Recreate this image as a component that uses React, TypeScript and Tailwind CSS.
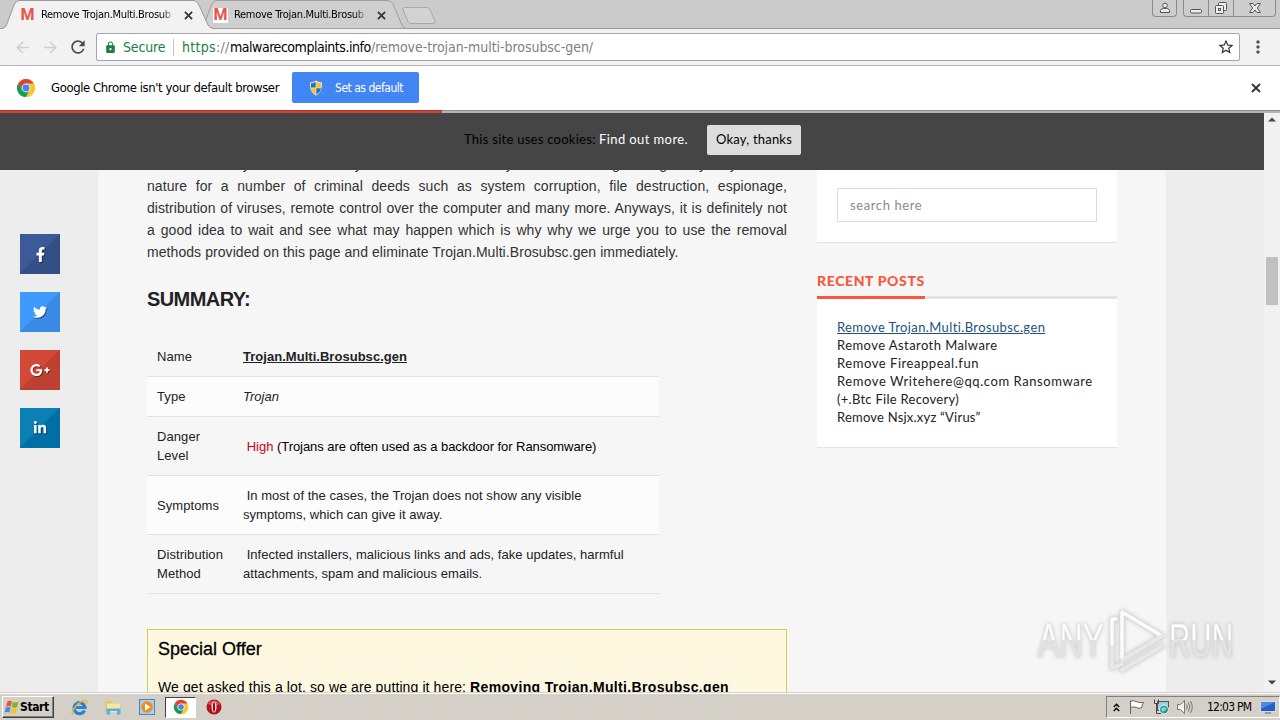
import { clsx } from "clsx";
import type { ReactNode } from "react";
import { FaFacebookF, FaGooglePlusG, FaLinkedinIn, FaTwitter } from "react-icons/fa";
import { MdArrowBack, MdArrowForward, MdLock, MdMoreVert, MdRefresh, MdStarBorder } from "react-icons/md";

const recentPosts = [
  { title: "Remove Astaroth Malware", tracking: "tracking-[0.43px]" },
  { title: "Remove Fireappeal.fun", tracking: "tracking-[0.55px]" },
  { title: "Remove Writehere@qq.com Ransomware", tracking: "tracking-[0.58px]" },
  { title: "(+.Btc File Recovery)", tracking: "tracking-[0.28px]" },
  { title: "Remove Nsjx.xyz “Virus”", tracking: "tracking-[0.22px]" },
];

const socials = [
  { name: "facebook", color: "from-[#3c5a9a] to-[#344e86]", icon: <FaFacebookF size={15} /> },
  { name: "twitter", color: "from-[#4099ff] to-[#3a8ae6]", icon: <FaTwitter size={14} /> },
  { name: "google", color: "from-[#d34836] to-[#bd4031]", icon: <FaGooglePlusG size={20} /> },
  { name: "linkedin", color: "from-[#0c7fb5] to-[#006fa6]", icon: <FaLinkedinIn size={14} /> },
];

function Close({ size, className }: { size: number; className?: string }) {
  return (
    <svg className={className} width={size} height={size} viewBox="0 0 10 10" fill="none" stroke="#333" strokeWidth="1.9">
      <path d="M1 1 9 9M9 1 1 9" />
    </svg>
  );
}

function ChromeLogo({ size }: { size: number }) {
  return (
    <svg width={size} height={size} viewBox="0 0 20 20">
      <circle cx="10" cy="10" r="9" fill="#fbc62d" />
      <path d="M2.2 5.5A9 9 0 0 0 10 19L13.6 12.1 10 10 6.4 12.1Z" fill="#0f9d58" />
      <path d="M10 5.6 17.8 5.5A9 9 0 0 1 10 19L13.7 12.1Z" fill="#fbc62d" />
      <path d="M2.2 5.5 6.4 12 10 10 10 5.6 17.8 5.5A9 9 0 0 0 2.2 5.5Z" fill="#db4437" />
      <circle cx="10" cy="10" r="4.4" fill="#f1f1f1" />
      <circle cx="10" cy="10" r="3.4" fill="#4285f4" />
    </svg>
  );
}

function Shield() {
  return (
    <svg width="14" height="16" viewBox="0 0 14 16">
      <path d="M7 .5C5 2 3 2.3 1 2.2.6 8 2 13 7 15.5 12 13 13.4 8 13 2.2 11 2.3 9 2 7 .5Z" fill="#e9e3c0" />
      <path d="M6.7 2C5 3 3.7 3.3 2 3.3L1.9 7.5H6.7Z" fill="#2b6fc4" />
      <path d="M7.3 2C9 3 10.3 3.3 12 3.3L12.1 7.5H7.3Z" fill="#f5c62c" />
      <path d="M6.7 8.2H2C2.5 11 4 13 6.7 14.4Z" fill="#f5c62c" />
      <path d="M7.3 8.2H12C11.5 11 10 13 7.3 14.4Z" fill="#2b6fc4" />
    </svg>
  );
}

function Tab({ active }: { active?: boolean }) {
  return (
    <div className={clsx("relative flex h-[29px] items-center pt-px", active ? "z-10 w-[212px] pl-[20px]" : "-ml-[6px] w-[200px] pl-[7px]")}>
      <svg className={clsx("absolute top-0", active ? "left-0" : "-left-[3px]")} width="214" height="29">
        {active ? (
          <path d="M-2 28.5H2Q5 28.5 6.5 25L14 5Q16 .5 19 .5H194Q197 .5 199 5L208 25Q210 28.5 214 28.5V30H-2Z" fill="#f2f2f2" stroke="#9a9a9a" />
        ) : (
          <path d="M0 28.5 L5 14 9 4Q10 .5 14 .5H184Q188 .5 190 4L199 25Q200 28.5 204 28.5Z" fill="#cfcfcf" stroke="#9f9f9f" />
        )}
      </svg>
      {active && <span className="absolute bottom-0 left-[4px] h-px w-[206px] bg-[#f2f2f2]" />}
      <span className={clsx("relative flex h-[15px] w-[15px] items-center justify-center font-['Roboto'] text-[16px] leading-none font-bold text-[#e8534a]", !active && "bg-white")}>
        M
      </span>
      <span
        className={clsx(
          "relative ml-[6px] w-[134px] bg-linear-to-r from-black from-88% bg-clip-text text-[11px] tracking-[-0.3px] whitespace-nowrap text-transparent",
          active ? "to-[#f2f2f2]" : "to-[#cfcfcf]",
        )}
      >
        Remove Trojan.Multi.Brosub
      </span>
      <Close className="relative ml-[9px]" size={9} />
    </div>
  );
}

function WindowControls() {
  return (
    <div className="ml-auto flex h-[17px] pr-[4px]">
      <div className="mr-[6px] flex w-[25px] items-center justify-center rounded-b border border-t-0 border-[#8b8b8b] bg-[#cdcdcd]">
        <svg width="12" height="12" viewBox="0 0 12 12" fill="#eee" stroke="#555">
          <circle cx="6" cy="3.5" r="2.3" />
          <path d="M1.5 10.5V8.5Q2 6.5 4.5 6.5H7.5Q10 6.5 10.5 8.5V10.5Z" />
        </svg>
      </div>
      <div className="flex w-[93px] rounded-b border border-t-0 border-[#8b8b8b] bg-[#cdcdcd]">
        <div className="flex w-[25px] items-center justify-center border-r border-[#8b8b8b]">
          <svg width="14" height="14" fill="#eee" stroke="#555">
            <rect x="1.5" y="8.5" width="11" height="3.5" rx="1" />
          </svg>
        </div>
        <div className="flex w-[25px] items-center justify-center border-r border-[#8b8b8b]">
          <svg width="14" height="14" fill="#eee" stroke="#555">
            <rect x="4.5" y="1.5" width="8" height="8" rx="1" />
            <rect x="1.5" y="4.5" width="8" height="8" rx="1" />
            <rect x="4.5" y="7.5" width="2" height="2" />
          </svg>
        </div>
        <div className="flex flex-1 items-center justify-center">
          <svg width="14" height="12" fill="#eee" stroke="#555">
            <path d="M1.5 1.5H5L7 4 9 1.5H12.5L9.3 6 12.5 10.5H9L7 8 5 10.5H1.5L4.7 6Z" />
          </svg>
        </div>
      </div>
    </div>
  );
}

function TabStrip() {
  return (
    <div className="relative flex h-[29px] shrink-0 bg-[#cbcbcb]">
      <span className="absolute bottom-0 left-0 h-px w-full bg-[#9a9a9a]" />
      <Tab active />
      <Tab />
      <svg className="-ml-[6px]" width="40" height="29">
        <path d="M4.5 7.5H27Q29 7.5 30 9.5L35 21Q36 23.5 33 23.5H11Q9 23.5 8 21.5L3 10Q2 7.5 4.5 7.5Z" fill="#d3d3d3" stroke="#a8a8a8" />
      </svg>
      <WindowControls />
    </div>
  );
}

function Toolbar() {
  return (
    <div className="flex h-[37px] shrink-0 items-center border-b border-[#b4b4b4] bg-[#f2f2f2] pl-[13px]">
      <MdArrowBack className="text-[#cfcfcf]" size={19} />
      <MdArrowForward className="ml-[9px] text-[#cfcfcf]" size={19} />
      <MdRefresh className="ml-[8px] text-[#4a4a4a]" size={20} />
      <div className="ml-[8px] flex h-[28px] w-[1144px] items-center rounded-xs border border-[#a6a6a6] bg-white pl-[7px] text-[14px] whitespace-nowrap">
        <MdLock className="text-[#1a8043]" size={13} />
        <span className="ml-[6px] w-[43px] tracking-[-0.15px] text-[#1a8043]">Secure</span>
        <span className="mr-[8px] ml-[7px] h-[17px] w-px bg-[#c4c4c4]" />
        <span className="w-[48px] tracking-[0.3px] text-[#1a8043]">
          https<span className="text-[#808080]">://</span>
        </span>
        <span className="w-[141px] tracking-[-0.46px]">malwarecomplaints.info</span>
        <span className="tracking-[-0.05px] text-[#808080]">/remove-trojan-multi-brosubsc-gen/</span>
        <MdStarBorder className="mr-[4px] ml-auto text-[#333]" size={18} />
      </div>
      <MdMoreVert className="ml-[8px] text-[#555]" size={20} />
    </div>
  );
}

function DefaultBrowserBar() {
  return (
    <div className="flex h-[44px] shrink-0 items-center bg-white pr-[19px] pl-[16px]">
      <ChromeLogo size={20} />
      <span className="ml-[15px] w-[241px] text-[13px] tracking-[-0.41px] whitespace-nowrap">Google Chrome isn't your default browser</span>
      <button className="mb-px flex h-[31px] w-[127px] items-center rounded-xs bg-[#4285f4] pl-[17px] text-[12px] tracking-[-0.48px] text-white">
        <Shield />
        <span className="ml-[12px]">Set as default</span>
      </button>
      <Close className="ml-auto" size={10} />
    </div>
  );
}

function CookieBar() {
  return (
    <div className="flex h-[57px] shrink-0 bg-[#454545] pt-[12px] pl-[464px] font-['Lato'] text-[13px] leading-[28px] whitespace-nowrap">
      <span className="w-[135px] tracking-[0.27px] text-black">This site uses cookies:</span>
      <span className="w-[108px] tracking-[0.4px] text-white">Find out more.</span>
      <button className="h-[30px] w-[94px] rounded-xs bg-[#dddddd] pb-[2px] tracking-[0.2px] text-black">Okay, thanks</button>
    </div>
  );
}

function Row({ label, striped, children }: { label: string; striped?: boolean; children: ReactNode }) {
  return (
    <div className={clsx("flex items-center border-b border-[#e2e2e2] py-[10px] pl-[10px]", striped && "bg-[#fcfcfc]")}>
      <div className="w-[86px] shrink-0 pr-4 tracking-[0.08px]">{label}</div>
      <div className="flex-1 whitespace-pre">{children}</div>
    </div>
  );
}

function Article() {
  return (
    <article className="flex w-[640px] flex-col text-[#222]">
      <div className="-mt-[17px] text-[14px] leading-[22px] tracking-[0.07px] text-[#333]">
        <p className="[text-align-last:justify]">
          Threats are only known to be very harmful and act in a sly manner of doing damage they may have in
        </p>
        <p className="[text-align-last:justify]">nature for a number of criminal deeds such as system corruption, file destruction, espionage,</p>
        <p className="[text-align-last:justify]">distribution of viruses, remote control over the computer and many more. Anyways, it is definitely not</p>
        <p className="[text-align-last:justify]">a good idea to wait and see what may happen which is why why we urge you to use the removal</p>
        <p>methods provided on this page and eliminate Trojan.Multi.Brosubsc.gen immediately.</p>
      </div>
      <h2 className="mt-[24px] text-[20px] leading-[24px] font-bold tracking-[-0.58px]">SUMMARY:</h2>
      <div className="mt-[26px] w-[512px] text-[13px] leading-[19px]">
        <Row label="Name">
          <b className="tracking-[0.03px] underline">Trojan.Multi.Brosubsc.gen</b>
        </Row>
        <Row label="Type" striped>
          <i>Trojan</i>
        </Row>
        <Row label="Danger Level">
          {"\u00a0"}
          <span className="text-[#d0021b]">High</span> <span className="tracking-[-0.06px] text-black">(Trojans are often used as a backdoor for Ransomware)</span>
        </Row>
        <Row label="Symptoms" striped>
          <span className="tracking-[0.03px]">
            {"\u00a0In most of the cases, the Trojan does not show any visible\nsymptoms, which can give it away."}
          </span>
        </Row>
        <Row label="Distribution Method">
          <span className="tracking-[0.04px]">
            {"\u00a0Infected installers, malicious links and ads, fake updates, harmful\nattachments, spam and malicious emails."}
          </span>
        </Row>
      </div>
      <section className="mt-[35px] h-[120px] border border-[#cbd44c] bg-[#fdf8df] px-[10px] text-black">
        <h3 className="mt-[7px] text-[18px] leading-[24px] [-webkit-text-stroke:0.3px]">Special Offer</h3>
        <p className="mt-[15px] text-[14px] leading-[22px] whitespace-nowrap">
          <span className="tracking-[0.11px]">We get asked this a lot, so we are putting it here: </span>
          <b className="tracking-[0.34px]">Removing Trojan.Multi.Brosubsc.gen</b>
        </p>
      </section>
    </article>
  );
}

function Sidebar() {
  return (
    <aside className="w-[300px] font-['Lato'] text-[13px]">
      <div className="h-[73px] border-b border-[#e2e2e2] bg-white px-5 pt-[18px]">
        <div className="h-[34px] border border-[#ddd] pl-3 leading-[33px] tracking-[0.6px] text-[#8a8a8a]">search here</div>
      </div>
      <div className="mt-[28px] flex h-[28px] border-b-[3px] border-[#e3e3e3]">
        <h4 className="h-[28px] w-[108px] border-b-[3px] border-[#f9563b] text-[14px] leading-[19px] font-black tracking-[0.62px] whitespace-nowrap text-[#f9563b]">
          RECENT POSTS
        </h4>
      </div>
      <div className="flex h-[149px] flex-col border-b border-[#e2e2e2] bg-white px-5 pt-[19px] leading-[18px] whitespace-nowrap text-[#222]">
        <a className="tracking-[0.39px] text-[#1e5181] underline">Remove Trojan.Multi.Brosubsc.gen</a>
        {recentPosts.map((post) => (
          <a key={post.title} className={post.tracking}>
            {post.title}
          </a>
        ))}
      </div>
    </aside>
  );
}

function Scrollbar() {
  return (
    <div className="flex w-[16px] shrink-0 flex-col items-center bg-[#f1f1f1] pt-[4px] pb-[7px]">
      <svg width="8" height="5">
        <path d="M0 4.5 4 .5 8 4.5Z" fill="#444" />
      </svg>
      <div className="mt-[135px] h-[48px] w-[12px] bg-[#c1c1c1]" />
      <svg className="mt-auto" width="8" height="5">
        <path d="M0 .5 4 4.5 8 .5Z" fill="#444" />
      </svg>
    </div>
  );
}

function Watermark() {
  return (
    <svg className="absolute top-[604px] left-[1030px] drop-shadow-[0_0_2px_rgba(0,0,0,0.2)]" width="210" height="75" fill="none">
      <defs>
        <linearGradient id="fade" x1="0" y1="0" x2="0" y2="1">
          <stop offset="0.5" stopColor="#ffffff" />
          <stop offset="0.5" stopColor="#e2e2e2" />
        </linearGradient>
      </defs>
      <g fill="url(#fade)" stroke="#e0e0e0" strokeWidth="0.6" fontFamily="Liberation Sans" fontSize="49">
        <text x="8" y="53" textLength="66" lengthAdjust="spacingAndGlyphs">
          ANY
        </text>
        <text x="139" y="53" textLength="64" lengthAdjust="spacingAndGlyphs">
          RUN
        </text>
      </g>
      <g strokeLinejoin="round" strokeLinecap="round">
        <path d="M92 54V8L132 32 92 56M86 15H82V64L92 60M92 66 132 42" stroke="#dcdcdc" strokeWidth="5" />
        <path d="M92 54V8L132 32" stroke="#fbfbfb" strokeWidth="3.5" />
        <path d="M132 32 92 56M82 40V64L92 60M92 66 132 42" stroke="#e8e8e8" strokeWidth="3.5" />
        <path d="M86 15H82V40" stroke="#fbfbfb" strokeWidth="3.5" />
      </g>
    </svg>
  );
}

function Taskbar() {
  return (
    <div className="flex h-[28px] shrink-0 border-t border-[#d4cfc7] bg-[#d4cfc7]">
      <div className="flex w-full items-center border-t border-white pl-[2px]">
        <button className="flex h-[22px] w-[52px] items-center border border-t-white border-r-[#404040] border-b-[#404040] border-l-white pl-px text-[12px] font-bold tracking-[-0.4px] shadow-[inset_-1px_-1px_0_#808080]">
          <svg width="16" height="16" viewBox="0 0 16 16">
            <path d="M3.5 2.5Q5.5 1 8 2.5L6.8 7.5Q4.5 6.3 2 7.5Z" fill="#e8582a" />
            <path d="M9 2.8Q11.5 4.2 14.5 2.8L13.2 8Q10.5 9.3 7.8 7.9Z" fill="#7db72f" />
            <path d="M1.8 8.5Q4.3 7.3 6.5 8.5L5.3 13.5Q3 12.3.6 13.5Z" fill="#3f8fd8" />
            <path d="M7.5 9Q10 10.3 13 9L11.7 14Q9 15.3 6.3 13.9Z" fill="#f7c22b" />
          </svg>
          <span>Start</span>
        </button>
        <svg className="ml-[17px]" width="17" height="17" viewBox="0 0 17 17" fill="none">
          <path d="M13.5 11.5A5.5 5.5 0 1 1 14 8.5H5" stroke="#2784d0" strokeWidth="3.2" />
          <path d="M2 15.5C-1 13 7 2 14 1.5 17 1.5 15.5 4 15 5" stroke="#e8b62f" strokeWidth="1.3" />
        </svg>
        <svg className="ml-[16px]" width="18" height="17" viewBox="0 0 18 17">
          <path d="M1.5 2H7L8.5 4H15.5V13H1.5Z" fill="#e9c65d" />
          <path d="M3 4.5H16V13H3Z" fill="#f8e7a0" />
          <path d="M2.5 9.5H16.5V15.5H13V12H6V15.5H2.5Z" fill="#5aaee0" />
        </svg>
        <svg className="ml-[17px]" width="16" height="16" viewBox="0 0 16 16">
          <rect x=".5" y=".5" width="15" height="15" fill="#a9cdea" stroke="#4a86bd" />
          <circle cx="8" cy="8" r="5.8" fill="#f28b1e" />
          <path d="M6 4.5 11.5 8 6 11.5Z" fill="#fff" />
        </svg>
        <div className="ml-[10px] flex h-[21px] w-[31px] items-center justify-center border border-t-[#404040] border-r-white border-b-white border-l-[#404040] bg-white">
          <ChromeLogo size={16} />
        </div>
        <svg className="ml-[10px]" width="16" height="16" viewBox="0 0 16 16">
          <circle cx="8" cy="8" r="7.5" fill="#b3121b" />
          <path d="M2 5A7 7 0 0 1 14 5Q8 8 2 5Z" fill="#d9545a" />
          <ellipse cx="8" cy="8" rx="2.5" ry="5.5" fill="#f3e6e6" />
          <ellipse cx="8" cy="8" rx="1.1" ry="4.8" fill="#8e0b12" />
        </svg>
        <div className="ml-auto flex h-[22px] w-[174px] items-center border border-t-[#808080] border-r-white border-b-white border-l-[#808080] pl-[6px]">
          <svg width="7" height="9" fill="none" stroke="#000" strokeWidth="1.4">
            <path d="M.8 4 3.5 1.2 6.2 4M.8 8 3.5 5.2 6.2 8" />
          </svg>
          <svg className="ml-[9px]" width="16" height="16" fill="#fff" stroke="#666">
            <path d="M1.5 15V1.5M1.5 2.5Q4 .8 7 2.5T14.5 3.5Q12.5 6 13 8.5 10 10 7 8.5T1.5 8.5Z" />
          </svg>
          <svg className="ml-[8px]" width="17" height="16">
            <rect x="4.5" y="2.5" width="11" height="9" fill="#9fcbe0" stroke="#555" />
            <path d="M1.5.5V4.5H5.5V.5M3.5 4.5V14.5H8" fill="none" stroke="#444" />
            <circle cx="11" cy="10.5" r="4.5" fill="#2f9aa0" stroke="#dff" />
            <path d="M8 10Q11 7 13.5 9.5L10 13Z" fill="#8fd8b0" />
          </svg>
          <svg className="ml-[7px]" width="16" height="16" fill="none" stroke="#777">
            <path d="M.5 5.5H3.5L7.5 1.5V14.5L3.5 10.5H.5Z" fill="#f6f6f6" />
            <path d="M9.5 5.5Q11 8 9.5 10.5M11.5 3.5Q14 8 11.5 12.5M13.5 2Q17 8 13.5 14" />
          </svg>
          <span className="ml-[14px] w-[53px] text-[12px] tracking-[-0.75px] whitespace-nowrap">12:03 PM</span>
          <svg width="16" height="14">
            <rect x=".5" y="1.5" width="15" height="10" fill="#2660c4" stroke="#d5dbe8" />
            <path d="M1 2H15L1 9Z" fill="#4f8ae0" />
            <path d="M5 13H11" stroke="#666" />
          </svg>
        </div>
      </div>
    </div>
  );
}

export default function App() {
  return (
    <div className="relative flex h-[720px] w-[1280px] flex-col overflow-hidden bg-white font-['DejaVu_Sans_Condensed','DejaVu_Sans',sans-serif] text-black">
      <TabStrip />
      <Toolbar />
      <DefaultBrowserBar />
      <div className="h-[3px] shrink-0 border-t border-[#8d8d8d] bg-[#b4b4b4]">
        <div className="-mt-px h-[3px] w-[442px] border-t border-[#b02f28] bg-[#cf4237]" />
      </div>
      <div className="flex min-h-0 flex-1">
        <div className="flex min-w-0 flex-1 flex-col bg-[#ededed] font-['Liberation_Sans',Arial,sans-serif]">
          <CookieBar />
          <div className="flex min-h-0 flex-1 overflow-hidden">
            <nav className="flex w-[98px] flex-col gap-[18px] pt-[64px] pl-5">
              {socials.map((social) => (
                <a
                  key={social.name}
                  className={clsx("flex h-10 w-10 items-center justify-center bg-linear-135 from-50% to-50% text-white [&>svg]:drop-shadow-[1px_1px_0_rgba(0,0,0,0.4)]", social.color)}
                >
                  {social.icon}
                </a>
              ))}
            </nav>
            <div className="flex w-[1068px] gap-[30px] bg-[#f6f6f6] pl-[49px]">
              <Article />
              <Sidebar />
            </div>
          </div>
        </div>
        <Scrollbar />
      </div>
      <Taskbar />
      <Watermark />
    </div>
  );
}
